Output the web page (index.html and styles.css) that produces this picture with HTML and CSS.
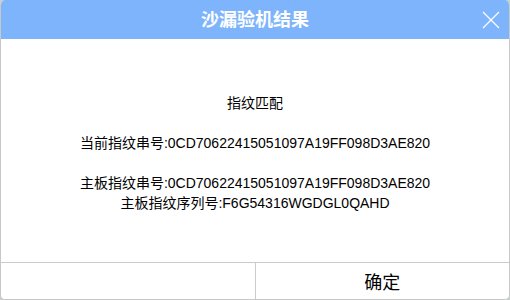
FILE: index.html
```html
<!DOCTYPE html>
<html>
<head>
    <meta charset="utf-8">
    <title>沙漏验机结果</title>
    <link rel="stylesheet" href="styles.css">
</head>
<body>
    <div class="dialog">
        <div class="dialog-header">
            <div class="dialog-title">沙漏验机结果</div>
            <svg class="close-btn" width="18" height="18" viewBox="0 0 18 18">
                <path d="M1 1 L17 17 M17 1 L1 17" stroke="#fff" stroke-width="1.2" fill="none"/>
            </svg>
        </div>
        <div class="dialog-body">
            <p class="gap">指纹匹配</p>
            <p class="gap">当前指纹串号:0CD70622415051097A19FF098D3AE820</p>
            <p>主板指纹串号:0CD70622415051097A19FF098D3AE820</p>
            <p>主板指纹序列号:F6G54316WGDGL0QAHD</p>
        </div>
        <div class="dialog-footer">
            <div class="btn"></div>
            <div class="btn btn-ok">确定</div>
        </div>
    </div>
</body>
</html>
```

FILE: styles.css
```css
body, html {
    margin: 0;
    padding: 0;
    width: 100%;
    height: 100%;
    background: #c9cfcd;
    overflow: hidden;
}

.dialog {
    box-sizing: border-box;
    width: 510px;
    height: 300px;
    display: flex;
    flex-direction: column;
    background: #fff;
    border: 1px solid #c8c8c8;
    border-top: none;
    border-radius: 5px;
    overflow: hidden;
    font-family: "Liberation Sans", "Noto Sans CJK SC", sans-serif;
}

.dialog-header {
    position: relative;
    height: 39px;
    flex-shrink: 0;
    background: #7db4fc;
    display: flex;
    align-items: center;
    justify-content: center;
}

.dialog-title {
    color: #fff;
    font-size: 18px;
    font-weight: bold;
    line-height: 39px;
    padding-top: 2px;
}

.close-btn {
    position: absolute;
    right: 9px;
    top: 11px;
}

.dialog-body {
    flex: 1;
    padding-top: 54px;
    text-align: center;
    font-size: 14px;
    line-height: 20px;
    color: #000;
}

.dialog-body p {
    margin: 0;
}

.dialog-body p.gap {
    margin-bottom: 20px;
}

.dialog-footer {
    height: 36px;
    flex-shrink: 0;
    display: flex;
    border-top: 1px solid #cbcbcb;
}

.btn {
    flex: 1;
    display: flex;
    align-items: center;
    justify-content: center;
    font-size: 18px;
    color: #000;
}

.btn-ok {
    border-left: 1px solid #cbcbcb;
}
```
